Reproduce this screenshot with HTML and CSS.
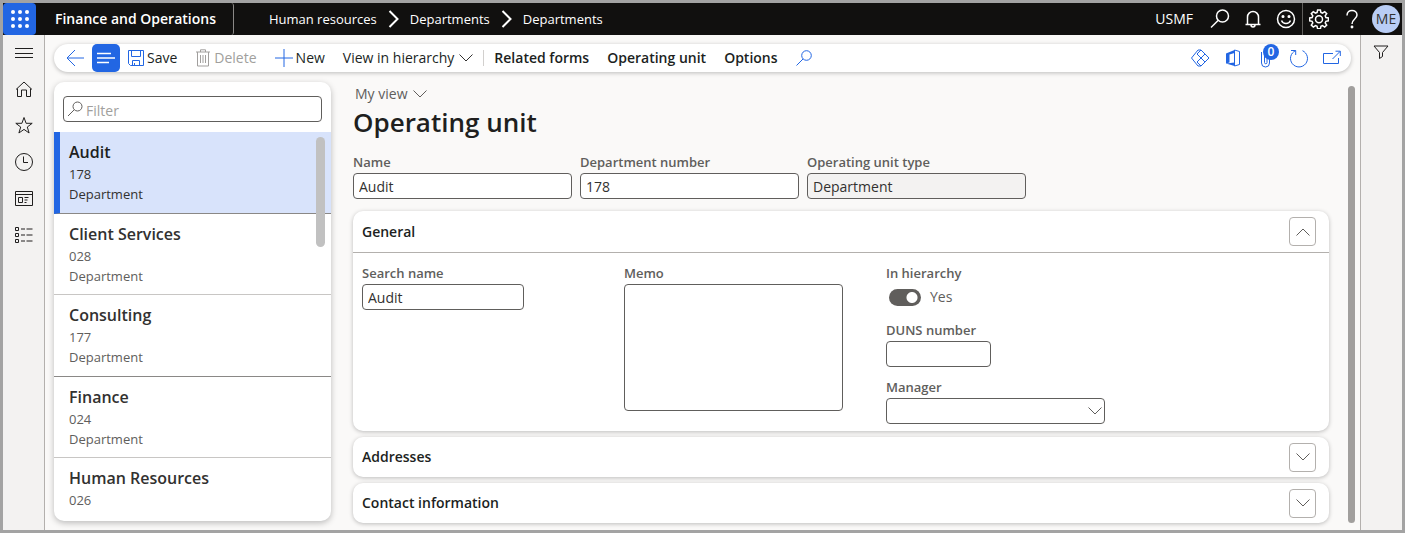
FILE: index.html
```html
<!DOCTYPE html>
<html lang="en">
<head>
  <meta charset="UTF-8">
  <meta name="viewport" content="width=device-width, initial-scale=1">
  <title>Departments - Finance and Operations</title>
  <link rel="stylesheet" href="styles.css">
</head>
<body>
  <div class="app">
    <header class="topbar">
      <button class="waffle" type="button" aria-label="App launcher">
        <svg width="18" height="18" viewBox="0 0 18 18">
          <circle cx="2" cy="2" r="2"/><circle cx="9" cy="2" r="2"/><circle cx="16" cy="2" r="2"/>
          <circle cx="2" cy="9" r="2"/><circle cx="9" cy="9" r="2"/><circle cx="16" cy="9" r="2"/>
          <circle cx="2" cy="16" r="2"/><circle cx="9" cy="16" r="2"/><circle cx="16" cy="16" r="2"/>
        </svg>
      </button>
      <a class="brand" href="#">Finance and Operations</a>
      <nav class="crumbs" aria-label="Breadcrumb">
        <a href="#">Human resources</a>
        <svg width="11" height="18" viewBox="0 0 11 18"><path d="M1.5 1l8 8-8 8"/></svg>
        <a href="#">Departments</a>
        <svg width="11" height="18" viewBox="0 0 11 18"><path d="M1.5 1l8 8-8 8"/></svg>
        <a href="#">Departments</a>
      </nav>
      <div class="top-actions">
        <button class="company" type="button">USMF</button>
        <button class="top-btn" type="button" aria-label="Search">
          <svg width="20" height="20" viewBox="0 0 20 20"><circle cx="12.5" cy="7" r="6"/><path d="M8.3 11.3L1 18.5"/></svg>
        </button>
        <button class="top-btn" type="button" aria-label="Notifications">
          <svg width="20" height="20" viewBox="0 0 20 20"><path d="M2.500 15.500h15M4.500 15.500V8a5.500 5.500 0 0 1 11 0v7.500M8 16c0 2.500 4 2.500 4 0"/></svg>
        </button>
        <button class="top-btn" type="button" aria-label="Feedback">
          <svg width="20" height="20" viewBox="0 0 20 20"><circle cx="10" cy="10" r="8.5"/><path d="M5.500 11.500c1.500 4 7.500 4 9 0"/><circle cx="7" cy="7.5" r=".8" fill="#fff"/><circle cx="13" cy="7.5" r=".8" fill="#fff"/></svg>
        </button>
        <button class="top-btn settings" type="button" aria-label="Settings">
          <svg width="20" height="20" viewBox="0 0 20 20"><path d="M8.600 1h2.800l.5 2.500 1.600.7 2.200-1.500 2 2-1.500 2.200.7 1.600 2.500.5v2.800l-2.500.5-.7 1.600 1.500 2.200-2 2-2.200-1.500-1.600.7-.5 2.500H8.600l-.5-2.500-1.600-.7-2.200 1.500-2-2 1.500-2.200-.7-1.600L.6 11.800V9l2.500-.5.7-1.600-1.500-2.200 2-2 2.200 1.500 1.600-.7z"/><circle cx="10" cy="10.300" r="3.500"/></svg>
        </button>
        <button class="top-btn" type="button" aria-label="Help">
          <svg width="20" height="20" viewBox="0 0 20 20"><path d="M5 6.500C5 -.5 15 0 15 6c0 4-5 4-5 9"/><circle cx="10" cy="18" r=".7" fill="#fff"/></svg>
        </button>
        <button class="avatar" type="button" aria-label="Account">ME</button>
      </div>
    </header>

    <div class="workspace">
      <nav class="rail" aria-label="Main">
        <a href="#" aria-label="Expand navigation">
          <svg width="20" height="20" viewBox="0 0 20 20"><path d="M1 4.500h18M1 9.500h18M1 13.500h18"/></svg>
        </a>
        <a href="#" aria-label="Home">
          <svg width="20" height="20" viewBox="0 0 20 20"><path d="M2 9.500L10 2l8 7.500M3.500 8.500v8h4V10h5v6.500h4v-8"/></svg>
        </a>
        <a href="#" aria-label="Favorites">
          <svg width="20" height="20" viewBox="0 0 20 20"><path d="M10 1.500l2.100 5.800h6.100l-4.900 3.700 1.800 6-5.100-3.600L4.900 17l1.800-6-4.900-3.700h6.100z"/></svg>
        </a>
        <a href="#" aria-label="Recent">
          <svg width="20" height="20" viewBox="0 0 20 20"><circle cx="10" cy="10" r="8.5"/><path d="M9.500 4.500v6H14"/></svg>
        </a>
        <a href="#" aria-label="Workspaces">
          <svg width="20" height="20" viewBox="0 0 20 20"><path d="M1.500 3.500h17v14h-17zM1.500 6.500h17M4.500 9.500h4v5h-4zM10.500 9.500h4M10.500 12h3M10.500 14.500h2"/></svg>
        </a>
        <a href="#" aria-label="Modules">
          <svg width="20" height="20" viewBox="0 0 20 20"><path d="M1.500 3.500h3v3h-3zM1.500 9.500h3v3h-3zM1.500 15.500h3v3h-3zM7 5h4M12.500 5h6M7 11h4M12.500 11h6M7 17h4M12.500 17h6"/></svg>
        </a>
      </nav>

      <div class="content">
        <div class="commands">
          <button class="cmd cmd-back" type="button" aria-label="Back">
            <svg width="18" height="18" viewBox="0 0 18 18"><path d="M18 9H1M9 1L1 9l8 8"/></svg>
          </button>
          <button class="list-toggle" type="button" aria-label="Show list">
            <svg width="20" height="12" viewBox="0 0 20 12"><path d="M1 1.500h14M1 6h18M1 10.500h12"/></svg>
          </button>
          <button class="cmd" type="button">
            <svg width="16" height="16" viewBox="0 0 16 16"><path d="M.5.5h15v15h-13l-2-2zM3.500.5v6h9v-6M4.500 15.500v-5h7v5M6.500 15.500V13"/></svg>Save
          </button>
          <button class="cmd cmd-delete" type="button" disabled>
            <svg width="16" height="18" viewBox="0 0 16 18"><path d="M1 3h14M5.500 3V.8h5V3M2.500 3v14h11V3M5.500 6v8M8 6v8M10.500 6v8"/></svg>Delete
          </button>
          <button class="cmd" type="button">
            <svg width="18" height="18" viewBox="0 0 18 18"><path d="M9 0v18M0 9h18"/></svg>New
          </button>
          <button class="cmd menu" type="button">View in hierarchy
            <svg width="14" height="8" viewBox="0 0 14 8"><path d="M.5.5L7 7 13.500.5"/></svg>
          </button>
          <span class="divider"></span>
          <button class="cmd tab" type="button">Related forms</button>
          <button class="cmd tab" type="button">Operating unit</button>
          <button class="cmd tab" type="button">Options</button>
          <button class="cmd" type="button" aria-label="Search actions">
            <svg width="16" height="16" viewBox="0 0 16 16"><circle cx="10.5" cy="5.5" r="4.8"/><path d="M7 9L.5 15.500"/></svg>
          </button>
          <div class="cmd-end">
            <button class="cmd" type="button" aria-label="Power Apps">
              <svg width="20" height="20" viewBox="0 0 20 20"><path d="M11 2H8l-6.500 8L8 18h3M11 2l4 4-4 4-4-4zM11 10l4 4-4 4-4-4zM15 6l4 4-4 4-4-4z"/></svg>
            </button>
            <button class="cmd" type="button" aria-label="Open in Office">
              <svg width="20" height="20" viewBox="0 0 20 20"><path fill="#2266e3" stroke="none" d="M3 5.500L11.500 2v3L6.500 6.500v8L3 15.500zM3 15.500l8.500-1V18z"/><path d="M11.500 2l5 1.500v13l-5 1.500zM3.500 6v9"/></svg>
            </button>
            <button class="cmd clip" type="button" aria-label="Attachments">
              <svg width="20" height="20" viewBox="0 0 20 20"><path d="M5.500 4v11a4 4 0 0 0 8 0V5a2.500 2.500 0 0 0-5 0v9.500a1 1 0 0 0 2.500 0V6"/></svg>
              <span class="badge">0</span>
            </button>
            <button class="cmd" type="button" aria-label="Refresh">
              <svg width="20" height="20" viewBox="0 0 20 20"><path d="M6.500 2.700A8.500 8.500 0 1 0 13.500 2.700M2 2.500h4.700V7"/></svg>
            </button>
            <button class="cmd" type="button" aria-label="Open in new window">
              <svg width="20" height="20" viewBox="0 0 20 20"><path d="M11 5.500H1.500v10h15V10M10.500 11L18 3.500M13.500 3.200h4.800V8"/></svg>
            </button>
          </div>
        </div>

        <div class="panes">
          <aside class="list-card">
            <label class="filter">
              <svg width="16" height="16" viewBox="0 0 16 16"><circle cx="10.5" cy="5.5" r="4.5"/><path d="M7.300 8.700L1 15"/></svg>
              <input type="text" placeholder="Filter" aria-label="Filter">
            </label>
            <div class="list-wrap">
              <ul class="list">
                <li class="item selected"><h2>Audit</h2><p>178</p><p>Department</p></li>
                <li class="item"><h2>Client Services</h2><p>028</p><p>Department</p></li>
                <li class="item"><h2>Consulting</h2><p>177</p><p>Department</p></li>
                <li class="item"><h2>Finance</h2><p>024</p><p>Department</p></li>
                <li class="item"><h2>Human Resources</h2><p>026</p></li>
              </ul>
              <span class="list-thumb"></span>
            </div>
          </aside>

          <main class="form">
            <button class="view" type="button">My view
              <svg width="14" height="8" viewBox="0 0 14 8"><path d="M.5.5L7 7 13.500.5"/></svg>
            </button>
            <h1>Operating unit</h1>
            <div class="fields">
              <div class="field">
                <label for="name">Name</label>
                <input id="name" type="text" value="Audit">
              </div>
              <div class="field">
                <label for="number">Department number</label>
                <input id="number" type="text" value="178">
              </div>
              <div class="field">
                <label for="type">Operating unit type</label>
                <input id="type" type="text" value="Department" readonly>
              </div>
            </div>

            <div class="sections">
              <section class="section">
                <div class="section-head open">
                  <h3>General</h3>
                  <button class="expander" type="button" aria-label="Collapse General">
                    <svg width="14" height="8" viewBox="0 0 14 8"><path d="M.5 7.500L7 1l6.500 6.500"/></svg>
                  </button>
                </div>
                <div class="section-body">
                  <div class="column">
                    <div class="field medium">
                      <label for="search-name">Search name</label>
                      <input id="search-name" type="text" value="Audit">
                    </div>
                  </div>
                  <div class="column">
                    <div class="field">
                      <label for="memo">Memo</label>
                      <textarea id="memo"></textarea>
                    </div>
                  </div>
                  <div class="column">
                    <div class="field">
                      <label for="hierarchy">In hierarchy</label>
                      <div class="toggle">
                        <input id="hierarchy" type="checkbox" checked>
                        <span>Yes</span>
                      </div>
                    </div>
                    <div class="field small">
                      <label for="duns">DUNS number</label>
                      <input id="duns" type="text">
                    </div>
                    <div class="field">
                      <label for="manager">Manager</label>
                      <div class="combo">
                        <select id="manager"><option></option></select>
                        <svg width="14" height="8" viewBox="0 0 14 8"><path d="M.5.5L7 7 13.500.5"/></svg>
                      </div>
                    </div>
                  </div>
                </div>
              </section>
              <section class="section">
                <div class="section-head">
                  <h3>Addresses</h3>
                  <button class="expander" type="button" aria-label="Expand Addresses">
                    <svg width="14" height="8" viewBox="0 0 14 8"><path d="M.5.5L7 7 13.500.5"/></svg>
                  </button>
                </div>
              </section>
              <section class="section">
                <div class="section-head">
                  <h3>Contact information</h3>
                  <button class="expander" type="button" aria-label="Expand Contact information">
                    <svg width="14" height="8" viewBox="0 0 14 8"><path d="M.5.5L7 7 13.500.5"/></svg>
                  </button>
                </div>
              </section>
            </div>
          </main>
          <span class="form-thumb"></span>
        </div>
      </div>

      <aside class="filter-pane">
        <button type="button" aria-label="Show filters">
          <svg width="16" height="16" viewBox="0 0 16 16"><path d="M1 2h14L9.500 8.500v4l-3 2v-6z"/></svg>
        </button>
      </aside>
    </div>
  </div>
</body>
</html>
```

FILE: styles.css
```css
* { box-sizing: border-box; }
body {
  margin: 0;
  font-family: "Segoe UI", "Open Sans", "Noto Sans", sans-serif;
  font-size: 14px;
  line-height: 20px;
  color: #201f1e;
}
h1, h2, h3, p, ul { margin: 0; padding: 0; }
a { color: inherit; text-decoration: none; }
button {
  margin: 0;
  padding: 0;
  border: 0;
  background: none;
  font: inherit;
  color: inherit;
  cursor: pointer;
}
svg {
  display: block;
  flex: none;
  fill: none;
  stroke: currentColor;
}
.app {
  display: flex;
  flex-direction: column;
  height: 100vh;
  border: 3px solid #a3a3a3;
  background: #faf9f8;
  overflow: hidden;
}

/* top bar */
.topbar {
  display: flex;
  flex: none;
  height: 32px;
  background: #11100f;
  color: #fff;
  font-size: 13px;
}
.waffle {
  display: flex;
  align-items: center;
  justify-content: center;
  width: 33px;
  border-radius: 4px;
  background: #2266e3;
}
.waffle svg {
  fill: #fff;
  stroke: none;
}
.brand {
  padding: 0 17px 0 19px;
  border-right: 1px solid #8a8886;
  border-radius: 3px;
  font-size: 14px;
  font-weight: 600;
  line-height: 32px;
}
.crumbs {
  display: flex;
  align-items: center;
  gap: 11px;
  margin-left: 35px;
}
.crumbs svg { stroke-width: 2; }
.top-actions {
  display: flex;
  margin-left: auto;
}
.company {
  margin-right: 10px;
  font-size: 14px;
}
.top-btn {
  display: flex;
  align-items: center;
  justify-content: center;
  width: 33px;
}
.top-btn svg { stroke-width: 1.5; }
.settings { border-left: 1px solid #605e5c; }
.avatar {
  align-self: center;
  width: 28px;
  height: 28px;
  margin: 0 2px 0 4px;
  border-radius: 50%;
  background: #b9cdf5;
  color: #323130;
  font-size: 14px;
}

/* side rails */
.workspace {
  display: flex;
  flex: 1;
  min-height: 0;
}
.rail {
  display: flex;
  flex-direction: column;
  align-items: center;
  gap: 16px;
  width: 42px;
  padding-top: 9px;
  border-right: 1px solid #b3b0ad;
  background: #f3f2f1;
}
.filter-pane {
  width: 42px;
  padding: 9px 12px;
  border-left: 1px solid #b3b0ad;
  background: #f3f2f1;
}
.content {
  display: flex;
  flex: 1;
  flex-direction: column;
  min-width: 0;
  padding: 9px 5px 0 9px;
}

/* command bar */
.commands {
  display: flex;
  flex: none;
  align-items: center;
  gap: 18px;
  height: 28px;
  margin-right: 4px;
  padding: 0 9px 0 12px;
  border-radius: 14px;
  background: #fff;
  box-shadow: 0 1px 4px rgba(0, 0, 0, .25);
}
.cmd {
  display: flex;
  align-items: center;
  gap: 3px;
  white-space: nowrap;
}
.cmd svg { color: #2266e3; }
.cmd-back { margin-right: -10px; }
.list-toggle {
  display: flex;
  align-items: center;
  justify-content: center;
  width: 28px;
  height: 28px;
  margin-right: -10px;
  border-radius: 5px;
  background: #2266e3;
  color: #fff;
}
.list-toggle svg { stroke-width: 1.5; }
.cmd-delete, .cmd-delete svg { color: #a19f9d; }
.menu { gap: 5px; }
.menu svg { color: #323130; }
.divider {
  width: 1px;
  height: 16px;
  margin: 0 -8px;
  background: #d2d0ce;
}
.tab { font-weight: 600; }
.cmd-end {
  display: flex;
  gap: 13px;
  margin-left: auto;
}
.clip { position: relative; }
.badge {
  position: absolute;
  top: -4px;
  left: 7px;
  width: 16px;
  height: 16px;
  border-radius: 50%;
  background: #2266e3;
  color: #fff;
  font-size: 12px;
  font-weight: 600;
  line-height: 16px;
}

/* department list */
.panes {
  display: flex;
  flex: 1;
  min-height: 0;
  padding-top: 10px;
}
.list-card {
  display: flex;
  flex: none;
  flex-direction: column;
  width: 277px;
  margin-bottom: 9px;
  border-radius: 10px;
  background: #fff;
  box-shadow: 0 2px 6px rgba(0, 0, 0, .25);
  overflow: hidden;
}
.filter {
  display: flex;
  flex: none;
  align-items: center;
  gap: 3px;
  height: 26px;
  margin: 14px 9px 10px;
  padding: 0 3px;
  border: 1px solid #605e5c;
  border-radius: 4px;
}
.filter svg { color: #605e5c; }
.filter input {
  flex: 1;
  min-width: 0;
  padding: 3px 0 0;
  border: 0;
  outline: 0;
  font: inherit;
}
.filter input::placeholder { color: #a19f9d; }
.list-wrap {
  position: relative;
  min-height: 0;
}
.list { list-style: none; }
.item {
  padding: 8px 15px;
  border-bottom: 1px solid #c8c6c4;
  color: #605e5c;
  font-size: 13px;
}
.item:nth-child(odd) {
  padding-bottom: 9px;
  border-color: #8a8886;
}
.item:last-child { border-bottom: 0; }
.item h2 {
  color: #323130;
  font-size: 16px;
  font-weight: 600;
  line-height: 24px;
}
.item.selected {
  padding-left: 9px;
  border-left: 6px solid #2266e3;
  background: #d8e3fb;
  color: #323130;
}
.item.selected h2 { color: #201f1e; }
.list-thumb {
  position: absolute;
  top: 5px;
  right: 6px;
  width: 9px;
  height: 110px;
  border-radius: 5px;
  background: #c1c1c1;
}

/* form */
.form {
  flex: 1;
  min-width: 0;
  padding: 2px 19px 0 22px;
}
.form-thumb {
  width: 7px;
  margin: 4px 0 7px;
  border-radius: 4px;
  background: #a19f9d;
}
.view {
  display: flex;
  align-items: center;
  gap: 6px;
  margin-left: 2px;
  color: #605e5c;
}
h1 {
  font-size: 26px;
  font-weight: 600;
  line-height: 36px;
}
.fields {
  display: grid;
  grid-template-columns: repeat(3, 219px);
  gap: 8px;
  margin: 12px 0;
}
.field label {
  display: block;
  color: #605e5c;
  font-size: 13px;
  font-weight: 600;
  line-height: 21px;
}
.field input[type="text"], .field textarea, .field select {
  display: block;
  width: 100%;
  height: 26px;
  padding: 0 5px;
  border: 1px solid #605e5c;
  border-radius: 4px;
  background: #fff;
  color: #323130;
  font: inherit;
}
.field input[type="text"][readonly] { background: #f3f2f1; }
.field textarea {
  height: 127px;
  resize: none;
}
.medium { width: 162px; }
.small { width: 105px; }
.sections {
  display: grid;
  gap: 6px;
}
.section {
  border-radius: 10px;
  background: #fff;
  box-shadow: 0 1px 4px rgba(0, 0, 0, .25);
}
.section-head {
  display: flex;
  align-items: center;
  justify-content: space-between;
  height: 40px;
  padding: 0 13px 0 9px;
}
.section-head.open {
  height: 42px;
  border-bottom: 1px solid #b3b0ad;
}
.section-head h3 {
  font-size: 14px;
  font-weight: 600;
}
.expander {
  display: flex;
  align-items: center;
  justify-content: center;
  width: 27px;
  height: 29px;
  border: 1px solid #b3b0ad;
  border-radius: 4px;
  color: #605e5c;
}
.section-body {
  display: grid;
  grid-template-columns: repeat(3, 219px);
  gap: 43px;
  padding: 10px 9px 7px;
}
.column {
  display: grid;
  align-content: start;
  gap: 10px;
}
.toggle {
  display: flex;
  align-items: center;
  gap: 9px;
  height: 26px;
  padding-left: 3px;
  color: #605e5c;
}
.toggle input {
  appearance: none;
  width: 32px;
  height: 17px;
  margin: 0;
  border-radius: 9px;
  background: radial-gradient(circle at 23px 50%, #fff 5px, #605e5c 6px);
}
.combo {
  display: grid;
  align-items: center;
}
.combo select {
  grid-area: 1 / 1;
  appearance: none;
}
.combo svg {
  grid-area: 1 / 1;
  justify-self: end;
  margin-right: 3px;
  color: #605e5c;
  pointer-events: none;
}
```
